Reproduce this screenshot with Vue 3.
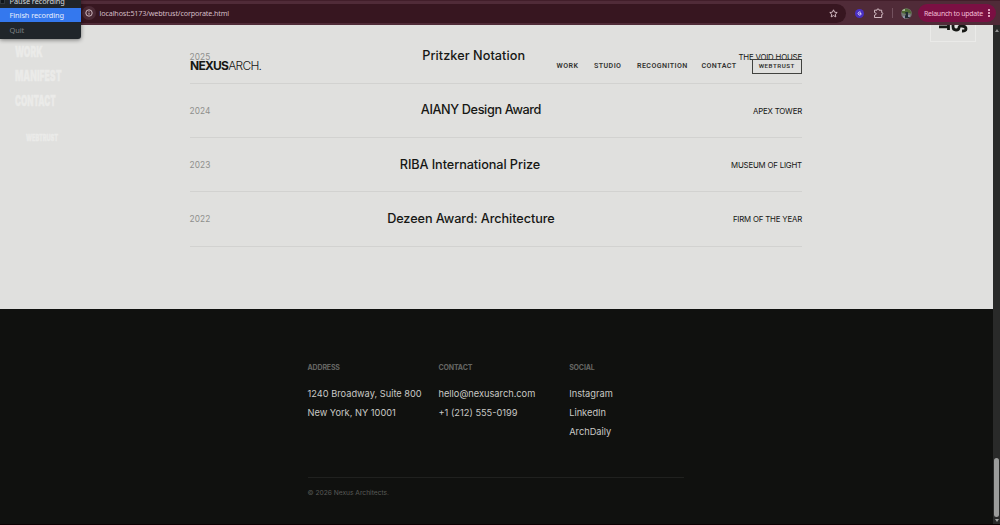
<script setup>
const awards = [
  { year: '2025', title: 'Pritzker Notation', project: 'THE VOID HOUSE', cls: 'pritzker' },
  { year: '2024', title: 'AIANY Design Award', project: 'APEX TOWER', cls: 'aiany' },
  { year: '2023', title: 'RIBA International Prize', project: 'MUSEUM OF LIGHT', cls: 'riba' },
  { year: '2022', title: 'Dezeen Award: Architecture', project: 'FIRM OF THE YEAR', cls: 'dezeen' }
]
const columns = [
  { name: 'ADDRESS', lines: ['1240 Broadway, Suite 800', 'New York, NY 10001'] },
  { name: 'CONTACT', lines: ['hello@nexusarch.com', '+1 (212) 555-0199'] },
  { name: 'SOCIAL', lines: ['Instagram', 'LinkedIn', 'ArchDaily'] }
]
</script>

<template>
  <div class="window">
    <header class="toolbar">
      <div class="address-bar">
        <span class="info"><svg width="8" height="8" viewBox="0 0 8 8"><circle cx="4" cy="4" r="3.2" /><path d="M4 3.7V5.7M4 2.1V2.8" /></svg></span>
        <span class="url">localhost:5173/webtrust/corporate.html</span>
        <svg class="star" width="9" height="9" viewBox="0 0 9 9"><path d="M4.5 .8 5.6 3.2 8.2 3.5 6.3 5.2 6.8 7.9 4.5 6.6 2.2 7.9 2.7 5.2 .8 3.5 3.4 3.2Z" /></svg>
      </div>
      <span class="extension"><svg width="9" height="9" viewBox="0 0 9 9"><path d="M5.9 3.4A1.6 1.6 0 1 0 5.9 5.6M4.5 4.5H6.1V5.6" /></svg></span>
      <svg class="puzzle" width="11" height="11" viewBox="0 0 11 11"><path d="M1.5 2.2H4V1.4Q5 .4 6 1.4V2.2H8.7V4.6H9.3Q10.3 5.6 9.3 6.6H8.7V9.5H1.5V7.1Q3.2 6.9 3.2 5.8T1.5 4.5Z" /></svg>
      <span class="divider"></span>
      <svg class="avatar" width="11" height="11" viewBox="0 0 11 11"><defs><clipPath id="face"><circle cx="5.5" cy="5.5" r="5.3" /></clipPath></defs><g clip-path="url(#face)"><path fill="#747974" d="M0 0h11v11H0z" /><path fill="#4f6934" d="M0 1 4 0 9 2 11 6 8 5 5 6 1 5Z" /><path fill="#a6b495" d="M1 1h3v2H1z" /><path fill="#202b33" d="M4 4h3v3l2 3H3l2-4z" /><path fill="#8d91a5" d="M2 8h2v3H2zM7 7h2v2H7z" /></g></svg>
      <div class="update"><span>Relaunch to update</span><i></i></div>
    </header>

    <div class="viewport">
      <main>
        <section class="recognition">
          <div class="awards">
            <article v-for="a in awards" :key="a.year" class="award" :class="a.cls">
              <time>{{ a.year }}</time><h2>{{ a.title }}</h2><p>{{ a.project }}</p>
            </article>
          </div>
        </section>
        <footer>
          <div class="foot-inner">
            <div class="columns">
              <section v-for="c in columns" :key="c.name">
                <h3>{{ c.name }}</h3>
                <p v-for="line in c.lines" :key="line">{{ line }}</p>
              </section>
            </div>
            <div class="legal">© 2026 Nexus Architects.</div>
          </div>
        </footer>
      </main>
      <aside class="scrollbar"><span class="up"></span><span class="thumb"></span><span class="down"></span></aside>
    </div>

    <nav class="site-nav">
      <div class="brand"><b>NEXUS</b><span>ARCH.</span></div>
      <a class="work">WORK</a><a class="studio">STUDIO</a><a class="recog">RECOGNITION</a><a class="cont">CONTACT</a>
      <a class="trust">WEBTRUST</a>
    </nav>

    <div class="ghost">
      <span class="g-work">WORK</span><span class="g-manifest">MANIFEST</span><span class="g-contact">CONTACT</span><span class="g-trust">WEBTRUST</span>
    </div>
    <div class="badge"><svg width="44" height="17" viewBox="0 0 44 17"><path d="M8 1.8H18M17.5 0V5" /><path d="M22 0V1.5Q22 5 25 5Q28 5 28 2.5Q28 .8 31 1Q35 1.2 35 4Q35 6.2 31 6" /></svg></div>
    <div class="recorder"><i></i><div class="pause">Pause recording</div><div class="finish">Finish recording</div><div class="quit">Quit</div></div>
  </div>
</template>

<style>
body { margin: 0; overflow: hidden; }
</style>

<style scoped>
* { box-sizing: border-box; }
h2, h3, p { margin: 0; font-weight: 400; }
.window { position: relative; width: 1000px; height: 525px; overflow: hidden; display: flex; flex-direction: column; background: #0b0002; font-family: Inter, "Liberation Sans", sans-serif; color: #161714; }
.toolbar { height: 25px; flex: none; display: flex; align-items: center; padding-left: 81px; background: #502b38; border-top: 1px solid #421e2a; font-family: "Noto Sans", sans-serif; }
.toolbar > * { flex: none; }
.address-bar { display: flex; align-items: center; width: 765px; height: 19px; background: #371620; border-radius: 0 10px 10px 0; color: #d4bec5; }
.info { width: 14px; height: 14px; border-radius: 50%; background: #4a2934; display: grid; place-items: center; margin-left: 1px; }
.info svg, .star, .puzzle { fill: none; stroke: #dfc8cf; stroke-width: .9; }
.url { margin-left: 3.5px; font-size: 7.2px; line-height: 12px; letter-spacing: -.14px; white-space: nowrap; }
.star { margin-left: auto; margin-right: 8px; }
.extension { width: 9px; height: 9px; border-radius: 50%; background: #4930c2; margin-left: 9px; display: flex; }
.extension path { fill: none; stroke: #e4ddff; stroke-width: .9; }
.puzzle { margin-left: 9px; }
.divider { width: 1px; height: 10px; background: #73515e; margin-left: 8px; }
.avatar { margin-left: 8px; }
.update { display: flex; align-items: center; margin-left: 6px; width: 78px; height: 18px; border-radius: 9px; background: #7b0f43; color: #f3bed4; font-size: 7px; padding-left: 6px; white-space: nowrap; }
.update span { letter-spacing: -.29px; width: 62px; }
.update i { width: 1.6px; height: 1.6px; background: #f3bed4; border-radius: 50%; box-shadow: 0 -3px #f3bed4, 0 3px #f3bed4; margin-left: 2px; flex: none; }
.viewport { height: 499px; display: flex; }
main { width: 993px; }
.recognition { height: 284px; padding-top: 4.5px; background: #e0e0de; overflow: hidden; }
.awards { width: 612.5px; margin-left: 189.5px; }
.award { height: 54.25px; border-bottom: 1px solid #d2d2d0; display: flex; justify-content: space-between; align-items: center; }
.award time { width: 21px; color: #8e8f8c; font-size: 8.3px; letter-spacing: .1px; padding-top: 1px; }
.award h2 { position: relative; left: -.8px; font-size: 12.7px; font-weight: 550; line-height: 18px; white-space: nowrap; }
.pritzker h2 { letter-spacing: .05px; }
.aiany h2 { letter-spacing: -.38px; }
.riba h2 { letter-spacing: -.08px; }
.dezeen h2 { letter-spacing: -.08px; }
.award p { font-size: 7.8px; line-height: 12px; letter-spacing: -.17px; padding-top: 1px; white-space: nowrap; text-align: right; }
footer { height: 215px; background: #10110f; color: #c9c9c6; padding-top: 54px; }
.foot-inner { width: 376px; margin-left: 307.5px; }
.columns { height: 115px; display: grid; grid-template-columns: 131px 130.7px 1fr; border-bottom: 1px solid #20211f; }
.columns h3 { color: #656663; font-weight: 700; font-size: 7px; line-height: 10px; margin-bottom: 12px; letter-spacing: -.15px; }
.columns p { font-size: 9.25px; line-height: 18.9px; white-space: nowrap; }
.legal { color: #595a57; font-size: 6.65px; line-height: 10px; margin-top: 10px; }
.scrollbar { width: 7px; background: #292a29; display: flex; flex-direction: column; align-items: center; padding: 4px 0 2px; }
.up, .down { border: 2px solid transparent; }
.up { border-top: 0; border-bottom: 3px solid #929392; }
.down { border-bottom: 0; border-top: 3px solid #a2a3a2; margin-top: 2px; }
.thumb { width: 5px; height: 59px; background: #9b9c9b; border-radius: 3px; margin-top: auto; }
.site-nav { position: absolute; left: 190px; top: 58px; width: 612px; height: 16px; display: flex; align-items: center; font-family: Roboto, "Liberation Sans", sans-serif; font-size: 7.1px; font-weight: 600; color: #333431; white-space: nowrap; }
.brand { width: 366.5px; display: flex; font-family: Inter, "Liberation Sans", sans-serif; font-size: 12px; line-height: 16px; color: #161714; letter-spacing: -.74px; }
.brand b { font-weight: 750; }
.brand span { font-weight: 300; }
.site-nav a { letter-spacing: .42px; padding-bottom: 1px; flex: none; }
.work { width: 37.5px; } .studio { width: 43px; } .recog { width: 64.5px; } .cont { width: 50px; }
.site-nav .trust { width: 50.5px; height: 15px; border: 1px solid #41423f; display: grid; place-items: center; font-size: 6.2px; padding: 0; letter-spacing: .5px; }
.ghost { position: absolute; left: 15px; top: 40px; display: flex; flex-direction: column; align-items: flex-start; color: #ebebe9; font-weight: 900; font-size: 14.5px; line-height: 24.4px; }
.ghost span { transform-origin: left center; white-space: nowrap; -webkit-text-stroke: .4px #ebebe9; }
.g-work { transform: scaleX(.59); } .g-manifest { transform: scaleX(.6); } .g-contact { transform: scaleX(.555); }
.g-trust { font-size: 8.5px; transform: scaleX(.66); margin: 13px 0 0 11px; }
.badge { position: absolute; left: 930px; top: 25px; width: 46px; height: 17px; border: 1px solid #eaeae8; border-top: 0; }
.badge svg { display: block; }
.badge path { fill: none; stroke: #171815; stroke-width: 2.8; }
.recorder { position: absolute; left: 0; top: 0; width: 81px; height: 39px; overflow: hidden; background: #20252a; border-radius: 0 0 3px 0; box-shadow: 0 1px 4px #0007; color: #d5d8da; font: 7.4px/13px "Noto Sans", sans-serif; letter-spacing: -.08px; }
.recorder > div { padding-left: 9.5px; height: 14px; white-space: nowrap; }
.recorder .pause { height: 8px; line-height: 3px; }
.recorder .finish { background: #3478ee; line-height: 14px; color: #e8eefc; }
.recorder .quit { line-height: 16px; color: #7d8184; }
.recorder i { position: absolute; left: 0; top: 0; width: 5px; height: 4px; background: #10151b; border: 1px solid #30373e; border-top: 0; }
</style>
